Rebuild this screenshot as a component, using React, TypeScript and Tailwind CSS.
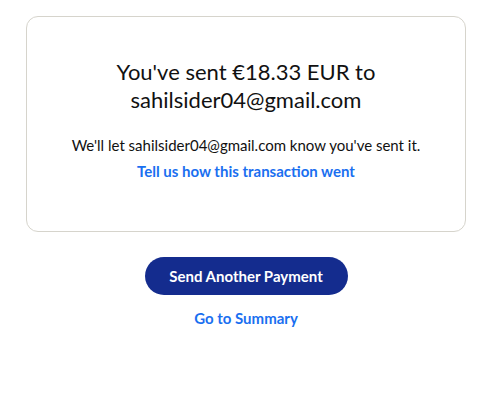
import React from 'react';

const font = { fontFamily: '"Lato", "Noto Sans", sans-serif' };

export default function App() {
  return (
    <div className="min-h-screen bg-white pl-[26px] pr-[19px] pt-[16px]" style={font}>
      <div className="rounded-[12px] border border-[#d6d4cc] px-6 pt-[41px] pb-[50px] text-center">
        <h1 className="text-[22px] leading-[28px] font-normal text-[#111111]">
          You've sent €18.33 EUR to
          <br />
          sahilsider04@gmail.com
        </h1>
        <p className="mt-[21px] text-[15px] leading-[20px] text-[#111111]">
          We'll let sahilsider04@gmail.com know you've sent it.
        </p>
        <a href="#" className="mt-[6px] block text-[15px] leading-[20px] font-bold text-[#1a6ff0]">
          Tell us how this transaction went
        </a>
      </div>
      <div className="mt-[25px] flex flex-col items-center">
        <button className="h-[38px] w-[203px] rounded-full bg-[#142c8e] text-[15px] font-bold text-white">
          Send Another Payment
        </button>
        <a href="#" className="mt-[13px] text-[15px] leading-[20px] font-bold text-[#1a6ff0]">
          Go to Summary
        </a>
      </div>
    </div>
  );
}
